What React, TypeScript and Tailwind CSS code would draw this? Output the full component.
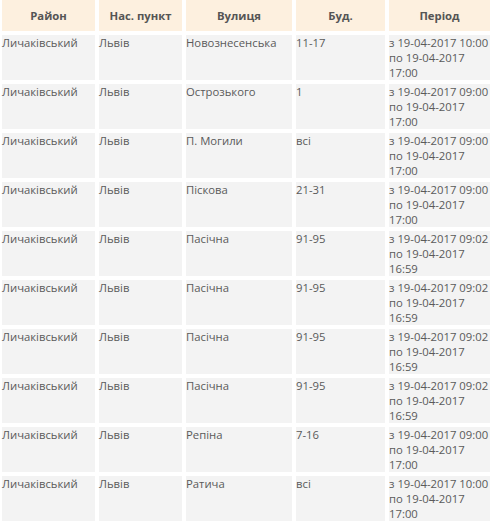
/**
 * Power outage schedule table (district / settlement / street / buildings / period).
 */

const rows = [
  { street: 'Новознесенська', bld: '11-17', from: '19-04-2017 10:00', to: '19-04-2017', end: '17:00' },
  { street: 'Острозького', bld: '1', from: '19-04-2017 09:00', to: '19-04-2017', end: '17:00' },
  { street: 'П. Могили', bld: 'всі', from: '19-04-2017 09:00', to: '19-04-2017', end: '17:00' },
  { street: 'Піскова', bld: '21-31', from: '19-04-2017 09:00', to: '19-04-2017', end: '17:00' },
  { street: 'Пасічна', bld: '91-95', from: '19-04-2017 09:02', to: '19-04-2017', end: '16:59' },
  { street: 'Пасічна', bld: '91-95', from: '19-04-2017 09:02', to: '19-04-2017', end: '16:59' },
  { street: 'Пасічна', bld: '91-95', from: '19-04-2017 09:02', to: '19-04-2017', end: '16:59' },
  { street: 'Пасічна', bld: '91-95', from: '19-04-2017 09:02', to: '19-04-2017', end: '16:59' },
  { street: 'Репіна', bld: '7-16', from: '19-04-2017 09:00', to: '19-04-2017', end: '17:00' },
  { street: 'Ратича', bld: 'всі', from: '19-04-2017 10:00', to: '19-04-2017', end: '17:00' },
]

const headers = ['Район', 'Нас. пункт', 'Вулиця', 'Буд.', 'Період']

export default function App() {
  return (
    <div className="h-[525px] w-[497px] overflow-hidden bg-white font-['Open_Sans',sans-serif] text-[11.3px] leading-[15px] text-[#5a5a5a]">
      <table className="-ml-[2px] -mt-[4px] table-fixed border-separate border-spacing-[4px]">
        <colgroup>
          <col className="w-[93px]" />
          <col className="w-[83px]" />
          <col className="w-[106px]" />
          <col className="w-[89px]" />
          <col className="w-[101px]" />
        </colgroup>
        <thead>
          <tr>
            {headers.map((h) => (
              <th
                key={h}
                className="h-[31px] bg-[#fdf0df] p-0 text-center align-middle text-[11.3px] font-bold text-[#555]"
              >
                {h}
              </th>
            ))}
          </tr>
        </thead>
        <tbody>
          {rows.map((r, i) => (
            <tr key={i}>
              <td className="h-[45px] bg-[#f3f3f3] p-0 align-top">Личаківський</td>
              <td className="bg-[#f3f3f3] p-0 align-top">Львів</td>
              <td className="bg-[#f3f3f3] p-0 align-top">{r.street}</td>
              <td className="bg-[#f3f3f3] p-0 align-top">{r.bld}</td>
              <td className="bg-[#f3f3f3] p-0 align-top">
                <div className="whitespace-nowrap">з {r.from}</div>
                <div className="whitespace-nowrap">по {r.to}</div>
                <div>{r.end}</div>
              </td>
            </tr>
          ))}
        </tbody>
      </table>
    </div>
  )
}
